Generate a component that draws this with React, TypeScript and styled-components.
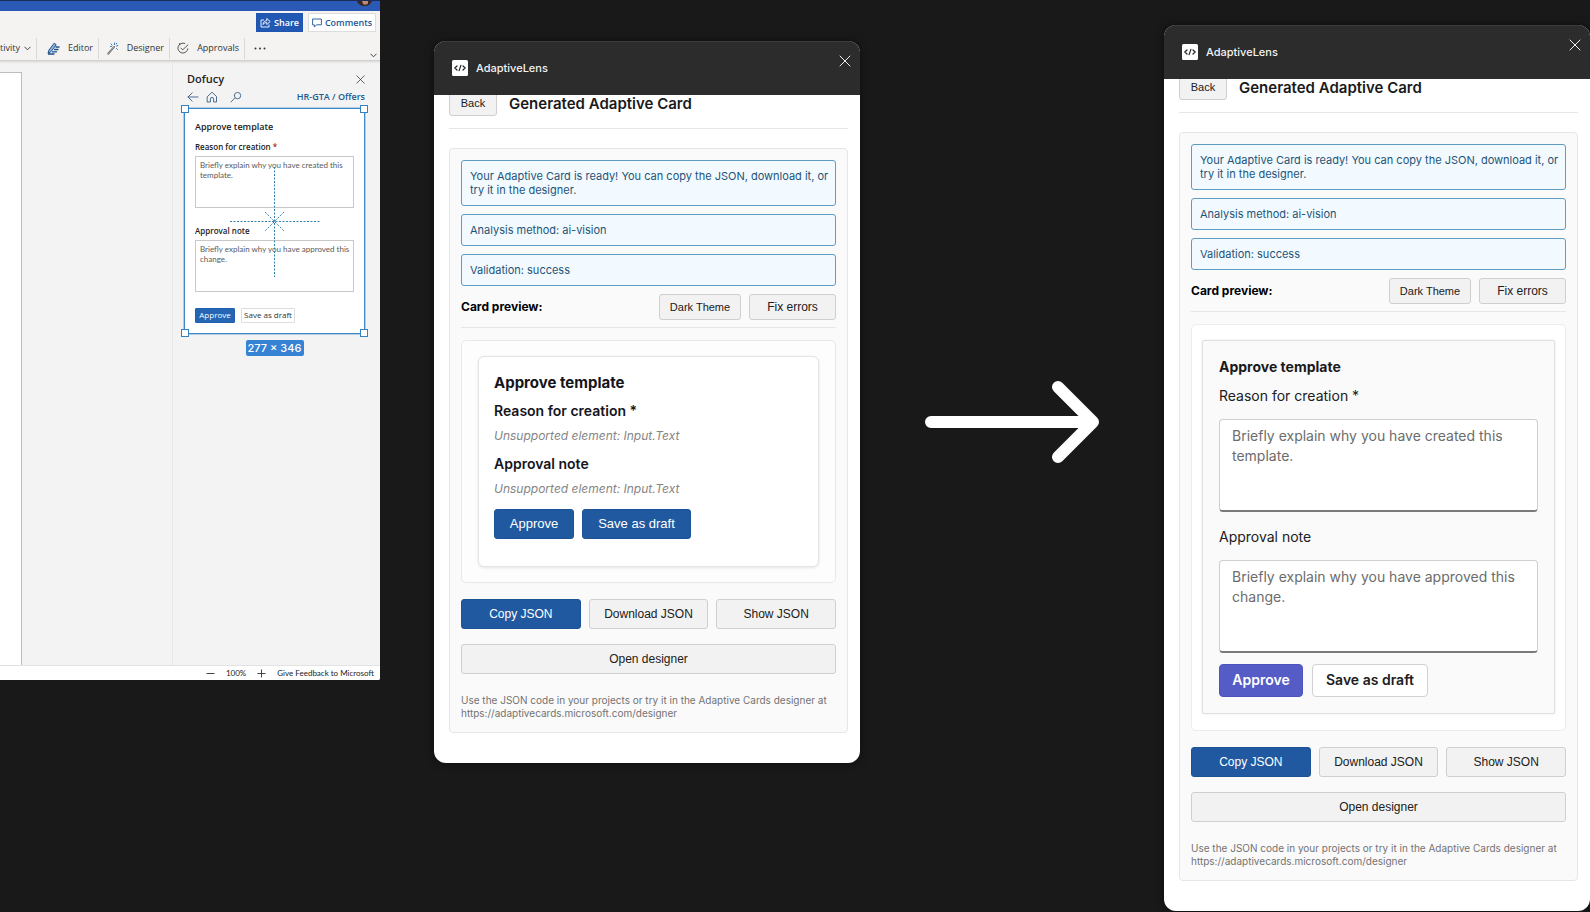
import React from "react";
import styled, { createGlobalStyle, css } from "styled-components";

const ui = `Inter, "Liberation Sans", sans-serif`;
const control = `"Liberation Sans", Arial, sans-serif`;
const office = `"Open Sans", "Noto Sans", sans-serif`;
const officeSmall = `Lato, "Open Sans", sans-serif`;

const GlobalStyle = createGlobalStyle`
  *, *::before, *::after { box-sizing: border-box; }
  html { background: #191919; }
  body { margin: 0; background: #191919; font-family: ${ui}; color: #1b1b1f; }
  h1, h2, h3, p { margin: 0; }
  button, textarea { margin: 0; }
  svg { flex-shrink: 0; }
`;

const Page = styled.main`
  display: grid;
  grid-template-columns: minmax(0, 380fr) minmax(0, 54fr) minmax(0, 426fr) minmax(0, 304fr) minmax(0, 426fr);
  align-items: start;
  min-height: 100vh;
  overflow: hidden;
`;

const Column = styled.div<{ $area: number; $top: number }>`
  grid-column: ${(p) => p.$area};
  grid-row: 1;
  padding-top: ${(p) => p.$top}px;
`;

/* ---------- Word window ---------- */

const WordWindow = styled.section`
  display: flex;
  flex-direction: column;
  overflow: hidden;
  background: #f3f3f3;
  font-family: ${office};
  border-bottom-right-radius: 2px;
`;

const TitleBar = styled.div`
  display: flex;
  justify-content: flex-end;
  height: 11px;
  padding-right: 8px;
  background: #2a5ab6;
  border-top: 1px solid #1b2c58;
`;

const Ribbon = styled.div`
  background: #f4f3f2;
  border-bottom: 1px solid #d2d0ce;
  box-shadow: 0 1px 2px rgba(0, 0, 0, 0.12);
  height: 50px;
`;

const RibbonTop = styled.div`
  display: flex;
  justify-content: flex-end;
  gap: 5px;
  padding: 2px 4px 0 0;
`;

const RibbonButton = styled.button<{ $primary?: boolean; $w: number }>`
  display: flex;
  align-items: center;
  justify-content: center;
  gap: 3px;
  width: ${(p) => p.$w}px;
  height: 19px;
  padding: 0;
  border: 1px solid ${(p) => (p.$primary ? "#1f55b0" : "#dcdcdc")};
  background: ${(p) => (p.$primary ? "#2158b4" : "#ffffff")};
  color: ${(p) => (p.$primary ? "#ffffff" : "#1c5796")};
  font: 600 9px/12px ${office};
`;

const RibbonTools = styled.div`
  display: flex;
  align-items: center;
  height: 28px;
  padding-top: 4px;
`;

const Tool = styled.button<{ $w: number; $gap?: number }>`
  display: flex;
  align-items: center;
  justify-content: flex-end;
  gap: ${(p) => p.$gap ?? 8}px;
  width: ${(p) => p.$w}px;
  height: 21px;
  padding: 0 5px 0 0;
  border: 0;
  border-right: 1px solid #d9d8d7;
  background: none;
  color: #333;
  font: 400 9px/12px ${office};
  white-space: nowrap;
`;

const MoreTool = styled.button`
  display: flex;
  align-items: center;
  padding: 0 0 0 9px;
  border: 0;
  background: none;
`;

const CollapseTool = styled.button`
  display: flex;
  align-self: flex-end;
  margin-left: auto;
  padding: 0 3px 2px 0;
  border: 0;
  background: none;
`;

const Workspace = styled.div`
  display: flex;
  min-height: 604px;
`;

const DocumentSheet = styled.div`
  width: 22px;
  margin-top: 11px;
  background: #ffffff;
  border: 1px solid #bdbdbd;
  border-left: 0;
  border-bottom: 0;
`;

const TaskPane = styled.aside`
  margin-left: auto;
  width: 208px;
  padding: 11px 15px 0 11px;
  border-left: 1px solid #e6e6e6;
`;

const PaneRow = styled.div<{ $h: number }>`
  display: flex;
  align-items: center;
  height: ${(p) => p.$h}px;
  padding-left: 3px;
`;

const PaneTitle = styled.h1`
  flex: 1;
  font: 600 11px/14px ${office};
  color: #1f1f1f;
`;

const IconButton = styled.button<{ $mr?: number }>`
  display: flex;
  padding: 0;
  margin-right: ${(p) => p.$mr ?? 0}px;
  border: 0;
  background: none;
`;

const PaneLink = styled.a`
  margin-left: auto;
  color: #205a93;
  font: 600 9px/12px ${office};
  text-decoration: none;
  white-space: nowrap;
`;

const Selection = styled.div`
  position: relative;
  margin-top: 1px;
  padding: 11px 10px 10px;
  border: 1px solid #3f8bc9;
  outline: 1px solid rgba(63, 139, 201, 0.35);
  background: #ffffff;
`;

const Handle = styled.span<{ $v: "top" | "bottom"; $h: "left" | "right" }>`
  position: absolute;
  ${(p) => p.$v}: -4px;
  ${(p) => p.$h}: -4px;
  width: 8px;
  height: 8px;
  background: #ffffff;
  border: 1px solid #3480c0;
`;

const Crosshair = styled.svg`
  position: absolute;
  left: 45px;
  top: 58px;
`;

const DraftTitle = styled.h2`
  font: 600 9px/14px ${office};
  color: #222;
  margin-bottom: 7px;
`;

const DraftLabel = styled.label`
  display: block;
  font: 600 8px/12px ${office};
  color: #222;
  margin-bottom: 3px;
  em { color: #a4262c; font-style: normal; }
`;

const DraftArea = styled.textarea<{ $gap: number }>`
  display: block;
  width: 100%;
  height: 52px;
  margin-bottom: ${(p) => p.$gap}px;
  padding: 3px 0 3px 4px;
  border: 1px solid #c8c8c8;
  background: #ffffff;
  font: 400 8px/10px ${officeSmall};
  resize: none;
  overflow: hidden;
  &::placeholder { color: #5a5a5a; opacity: 1; }
`;

const DraftActions = styled.div`
  display: flex;
  gap: 6px;
`;

const DraftButton = styled.button<{ $primary?: boolean }>`
  width: ${(p) => (p.$primary ? 40 : 54)}px;
  height: 15px;
  padding: 0 0 1px;
  border: 1px solid ${(p) => (p.$primary ? "#205eae" : "#dddddd")};
  border-radius: 1px;
  background: ${(p) => (p.$primary ? "#2465b4" : "#ffffff")};
  color: ${(p) => (p.$primary ? "#ffffff" : "#333333")};
  font: 400 8px/12px ${office};
  white-space: nowrap;
`;

const SizeBadge = styled.div`
  width: 58px;
  margin: 6px auto 0;
  border-radius: 2px;
  background: #3683d6;
  color: #ffffff;
  font: 500 11px/16px ${ui};
  text-align: center;
  white-space: nowrap;
`;

const StatusBar = styled.footer`
  display: flex;
  align-items: center;
  justify-content: flex-end;
  height: 15px;
  padding-right: 6px;
  border-top: 1px solid #e2e2e2;
  background: #ffffff;
  color: #222;
  font: 400 8px/12px ${officeSmall};
  gap: 11px;
`;

/* ---------- AdaptiveLens panel ---------- */

const Panel = styled.section`
  border-radius: 12px;
  overflow: hidden;
  background: #ffffff;
  box-shadow: 0 0 8px rgba(0, 0, 0, 0.5);
`;

const PanelHeader = styled.header`
  display: flex;
  align-items: center;
  gap: 8px;
  height: 54px;
  padding: 0 0 2px 18px;
  background: #2c2c2c;
  border-top: 1px solid #3c3c3c;
  color: #f2f2f2;
  font: 500 11px/16px ${ui};
`;

const CloseButton = styled.button`
  display: flex;
  align-self: flex-start;
  margin: 13px 9px 0 auto;
  padding: 0;
  border: 0;
  background: none;
`;

const PanelBody = styled.div`
  overflow: hidden;
  padding: 0 12px 30px 15px;
`;

/* The panel is scrolled a little, so the top of this row is under the header. */
const TitleRow = styled.div`
  display: flex;
  align-items: center;
  gap: 12px;
  margin: -5px 0 19px;
  padding-bottom: 12px;
  border-bottom: 1px solid #e6e6e6;
`;

const PanelTitle = styled.h2`
  padding-top: 2px;
  font: 600 15px/16px ${ui};
  color: #1a1a1a;
  white-space: nowrap;
`;

const Button = styled.button<{ $w?: number; $h?: number; $size?: number; $primary?: boolean; $grow?: boolean }>`
  ${(p) => (p.$grow ? css`flex: 1 1 0; min-width: 0;` : p.$w ? css`width: ${p.$w}px;` : css`width: 100%;`)}
  height: ${(p) => p.$h ?? 30}px;
  padding: 0;
  border: 1px solid ${(p) => (p.$primary ? "#1d5396" : "#d0cfce")};
  border-radius: 3px;
  background: ${(p) => (p.$primary ? "#20599f" : "#f3f2f2")};
  color: ${(p) => (p.$primary ? "#ffffff" : "#202020")};
  font: 400 ${(p) => p.$size ?? 12}px/16px ${control};
  white-space: nowrap;
`;

const Result = styled.div`
  padding: 11px 11px 12px;
  border: 1px solid #e6e6e6;
  border-radius: 4px;
  background: #fafafa;
`;

const Message = styled.p`
  margin-bottom: 8px;
  padding: 8px 0 8px 8px;
  border: 1px solid #5f9cc0;
  border-radius: 3px;
  background: #f3faff;
  color: #225478;
  font: 400 11px/14px ${ui};
`;

const PreviewBar = styled.div`
  display: flex;
  align-items: center;
  gap: 8px;
  margin-bottom: 12px;
  padding-bottom: 7px;
  border-bottom: 1px solid #e6e6e6;
`;

const PreviewLabel = styled.h3`
  flex: 1;
  font: 700 12px/16px ${ui};
  color: #000;
`;

const ActionRow = styled.div`
  display: flex;
  gap: 8px;
  margin: 16px 0 15px;
`;

const Hint = styled.p`
  margin-top: 20px;
  color: #737373;
  font: 400 10px/13px ${ui};
`;

const Preview = styled.div`
  padding: 15px 16px;
  border: 1px solid #e8e8e8;
  border-radius: 5px;
  background: #fdfdfd;
`;

const BasicCard = styled.div`
  padding: 15px 15px 27px;
  border: 1px solid #e4e4e4;
  border-radius: 6px;
  background: #ffffff;
  box-shadow: 0 1px 3px rgba(0, 0, 0, 0.1);
`;

const BasicTitle = styled.h3`
  font: 700 15px/22px ${ui};
  color: #15151c;
`;

const BasicLabel = styled.p<{ $gap: number }>`
  margin-top: ${(p) => p.$gap}px;
  font: 600 14px/20px ${ui};
  color: #15151c;
`;

const Unsupported = styled.p`
  margin-top: 7px;
  color: #858585;
  font: italic 400 12px/16px ${ui};
`;

const BasicActions = styled.div`
  display: flex;
  gap: 8px;
  margin-top: 12px;
`;

const FramePreview = styled.div`
  padding: 15px 10px 16px;
  border: 1px solid #ececec;
  border-radius: 5px;
  background: #ffffff;
`;

const FormCard = styled.form`
  padding: 16px;
  border: 1px solid #e0e0e0;
  border-radius: 2px;
  background: #fafafa;
  box-shadow: 0 0 3px rgba(0, 0, 0, 0.08);
`;

const FormTitle = styled.h3`
  margin-bottom: 9px;
  font: 700 14px/20px ${ui};
  color: #1a1a1a;
`;

const FormLabel = styled.label`
  display: block;
  margin-bottom: 13px;
  font: 400 14px/20px ${ui};
  color: #202020;
`;

const FormArea = styled.textarea<{ $gap: number }>`
  display: block;
  width: 100%;
  height: 93px;
  margin-bottom: ${(p) => p.$gap}px;
  padding: 6px 12px;
  border: 1px solid #cfcfcf;
  border-bottom: 2px solid #7a7a7a;
  border-radius: 4px;
  background: #ffffff;
  font: 400 14px/20px ${ui};
  resize: none;
  overflow: hidden;
  &::placeholder { color: #6c6c6c; opacity: 1; }
`;

const FormActions = styled.div`
  display: flex;
  gap: 9px;
`;

const FormButton = styled.button<{ $primary?: boolean }>`
  width: ${(p) => (p.$primary ? 84 : 116)}px;
  height: 33px;
  padding: 0 0 2px;
  border: 1px solid ${(p) => (p.$primary ? "#4f54bd" : "#d1d1d1")};
  border-radius: 4px;
  background: ${(p) => (p.$primary ? "#565cc6" : "#ffffff")};
  color: ${(p) => (p.$primary ? "#ffffff" : "#202020")};
  font: 600 14px/20px ${ui};
  white-space: nowrap;
`;

const ArrowColumn = styled(Column)`
  display: flex;
  justify-content: center;
`;

/* ---------- Drawings ---------- */

const Cross = ({ size, color, width = 1 }: { size: number; color: string; width?: number }) => (
  <svg width={size} height={size} viewBox="0 0 12 12" stroke={color} strokeWidth={width} strokeLinecap="round" fill="none">
    <path d="M1 1l10 10M11 1L1 11" />
  </svg>
);

const Chevron = () => (
  <svg width="7" height="5" viewBox="0 0 7 5" fill="none" stroke="#444" strokeWidth="1">
    <path d="M.5 .8l3 3 3-3" />
  </svg>
);

const CodeLogo = () => (
  <svg width="16" height="16" viewBox="0 0 16 16" fill="none" stroke="#222" strokeWidth="1.2" strokeLinecap="round" strokeLinejoin="round">
    <rect width="16" height="16" rx="1.5" fill="#fff" stroke="none" />
    <path d="M5 6L2.8 8 5 10M11 6l2.2 2L11 10M8.9 5.4L7.1 10.6" />
  </svg>
);

const ShareIcon = () => (
  <svg width="11" height="11" viewBox="0 0 11 11" fill="none" stroke="#fff" strokeWidth=".9" strokeLinejoin="round">
    <path d="M4 3H1v7h8V7.5" />
    <path d="M3 7.5C3.2 5 4.600 3.800 6.800 3.700V1.500L10.200 4.600 6.800 7.500V5.600C5 5.600 3.900 6.200 3 7.500z" />
  </svg>
);

const CommentIcon = () => (
  <svg width="10" height="10" viewBox="0 0 10 10" fill="none" stroke="#1c5796" strokeWidth=".9" strokeLinejoin="round">
    <path d="M.6 1h8.800v5.800H4.500L2.300 9V6.800H.6z" />
  </svg>
);

const EditorIcon = () => (
  <svg width="13" height="13" viewBox="0 0 13 13" fill="none" stroke="#1e4f8c" strokeLinejoin="round">
    <path d="M1 11.500L2 8 7.200 1.200 9.200 2.700 4 9.600z" strokeWidth="1" fill="#8fb7de" />
    <path d="M8.500 5h4M7 7.500h4.500M5 9.800h5M1 12h6.500" strokeWidth="1.300" />
  </svg>
);

const WandIcon = () => (
  <svg width="12" height="13" viewBox="0 0 12 13" fill="none" strokeLinecap="round">
    <path d="M1.300 11.700L7 5" stroke="#555" strokeWidth="1.800" />
    <path d="M1.500 11.500L6.800 5.200" stroke="#eee" strokeWidth=".6" />
    <path d="M7.500 1v1.500M4 2l1 1M10.800 3.500l-1.300.6M9.500 6.500l1 1M3.500 4.500h1M9.800 1.200l-.6.8" stroke="#2b78b8" strokeWidth="1" />
  </svg>
);

const ApprovalIcon = () => (
  <svg width="12" height="12" viewBox="0 0 12 12" fill="none" stroke="#444" strokeWidth=".9" strokeLinecap="round">
    <path d="M7.800 1.400A5 5 0 1 0 10.900 6.800M3.800 6l1.900 1.900L11 2.800" />
    <path d="M3 2.800L2.400 1.500" />
  </svg>
);

const Dots = () => (
  <svg width="13" height="3" viewBox="0 0 13 3" fill="#333">
    <circle cx="1.500" cy="1.500" r="1" /><circle cx="6" cy="1.500" r="1" /><circle cx="10.500" cy="1.500" r="1" />
  </svg>
);

const Avatar = () => (
  <svg width="15" height="5" viewBox="0 0 15 5">
    <path d="M0 0h15C14 3 11 5 7.500 5S1 3 0 0z" fill="#3a2523" />
    <path d="M5 0h6v2.500c-1.500 1.500-4 1.500-5 .5z" fill="#b98a74" />
  </svg>
);

const NavIcon = ({ d }: { d: string }) => (
  <svg width="12" height="12" viewBox="0 0 12 12" fill="none" stroke="#3c5f86" strokeWidth=".9" strokeLinecap="round" strokeLinejoin="round">
    <path d={d} />
  </svg>
);

const Sign = ({ plus }: { plus?: boolean }) => (
  <svg width="9" height="9" viewBox="0 0 9 9" stroke="#444" strokeWidth="1">
    <path d={plus ? "M.5 4.500h8M4.500.5v8" : "M.5 4.500h8"} />
  </svg>
);

const BigArrow = () => (
  <svg width="176" height="84" viewBox="0 0 176 84" fill="none" stroke="#fff" strokeWidth="12" strokeLinecap="round" strokeLinejoin="round">
    <path d="M7 42H168M134 7l35 35-35 35" />
  </svg>
);

/* ---------- Parts ---------- */

function WordApp() {
  return (
    <WordWindow aria-label="Word">
      <TitleBar><Avatar /></TitleBar>
      <Ribbon>
        <RibbonTop>
          <RibbonButton $primary $w={47}><ShareIcon />Share</RibbonButton>
          <RibbonButton $w={68}><CommentIcon />Comments</RibbonButton>
        </RibbonTop>
        <RibbonTools>
          <Tool $w={37} $gap={4}>tivity<Chevron /></Tool>
          <Tool $w={62}><EditorIcon />Editor</Tool>
          <Tool $w={71}><WandIcon />Designer</Tool>
          <Tool $w={75}><ApprovalIcon />Approvals</Tool>
          <MoreTool aria-label="More"><Dots /></MoreTool>
          <CollapseTool aria-label="Collapse ribbon"><Chevron /></CollapseTool>
        </RibbonTools>
      </Ribbon>
      <Workspace>
        <DocumentSheet />
        <TaskPane>
          <PaneRow $h={14}>
            <PaneTitle>Dofucy</PaneTitle>
            <IconButton aria-label="Close pane"><Cross size={9} color="#333" /></IconButton>
          </PaneRow>
          <PaneRow $h={21}>
            <IconButton aria-label="Back" $mr={7}><NavIcon d="M11 6H1M5.200 1.800L1 6l4.200 4.200" /></IconButton>
            <IconButton aria-label="Home" $mr={12}><NavIcon d="M1.500 5.500L6 1.200l4.500 4.300V11H7.600V8a1.600 1.600 0 0 0-3.200 0v3H1.500z" /></IconButton>
            <IconButton aria-label="Search"><NavIcon d="M1 11l3.800-4M4.300 4.600a3.200 3.200 0 1 1 6.400 0a3.200 3.200 0 1 1-6.400 0" /></IconButton>
            <PaneLink href="#offers">HR-GTA / Offers</PaneLink>
          </PaneRow>
          <Selection>
            <DraftTitle>Approve template</DraftTitle>
            <DraftLabel htmlFor="draft-reason">Reason for creation <em>*</em></DraftLabel>
            <DraftArea id="draft-reason" $gap={17} placeholder="Briefly explain why you have created this template." />
            <DraftLabel htmlFor="draft-note">Approval note</DraftLabel>
            <DraftArea id="draft-note" $gap={16} placeholder="Briefly explain why you have approved this change." />
            <DraftActions>
              <DraftButton $primary>Approve</DraftButton>
              <DraftButton>Save as draft</DraftButton>
            </DraftActions>
            <Crosshair width="90" height="110" viewBox="0 0 90 110" stroke="#2f7fae" strokeWidth="1" strokeDasharray="2 1.500" fill="none">
              <path d="M44.500 0V110M0 54.500H90M35 45l19 19M54 45L35 64" />
            </Crosshair>
            <Handle $v="top" $h="left" />
            <Handle $v="top" $h="right" />
            <Handle $v="bottom" $h="left" />
            <Handle $v="bottom" $h="right" />
          </Selection>
          <SizeBadge>277 × 346</SizeBadge>
        </TaskPane>
      </Workspace>
      <StatusBar>
        <Sign />
        <span>100%</span>
        <Sign plus />
        <span>Give Feedback to Microsoft</span>
      </StatusBar>
    </WordWindow>
  );
}

function LensPanel({ children }: { children: React.ReactNode }) {
  return (
    <Panel>
      <PanelHeader>
        <CodeLogo />
        <span>AdaptiveLens</span>
        <CloseButton aria-label="Close"><Cross size={12} color="#f0f0f0" /></CloseButton>
      </PanelHeader>
      <PanelBody>
        <TitleRow>
          <Button $w={48} $h={26} $size={11}>Back</Button>
          <PanelTitle>Generated Adaptive Card</PanelTitle>
        </TitleRow>
        <Result>
          <Message>Your Adaptive Card is ready! You can copy the JSON, download it, or try it in the designer.</Message>
          <Message>Analysis method: ai-vision</Message>
          <Message>Validation: success</Message>
          <PreviewBar>
            <PreviewLabel>Card preview:</PreviewLabel>
            <Button $w={82} $h={26} $size={11}>Dark Theme</Button>
            <Button $w={87} $h={26}>Fix errors</Button>
          </PreviewBar>
          {children}
          <ActionRow>
            <Button $grow $primary>Copy JSON</Button>
            <Button $grow>Download JSON</Button>
            <Button $grow>Show JSON</Button>
          </ActionRow>
          <Button>Open designer</Button>
          <Hint>Use the JSON code in your projects or try it in the Adaptive Cards designer at https://adaptivecards.microsoft.com/designer</Hint>
        </Result>
      </PanelBody>
    </Panel>
  );
}

export default function App() {
  return (
    <>
      <GlobalStyle />
      <Page>
        <Column $area={1} $top={0}>
          <WordApp />
        </Column>
        <Column $area={3} $top={41}>
          <LensPanel>
            <Preview>
              <BasicCard>
                <BasicTitle>Approve template</BasicTitle>
                <BasicLabel $gap={7}>Reason for creation *</BasicLabel>
                <Unsupported>Unsupported element: Input.Text</Unsupported>
                <BasicLabel $gap={10}>Approval note</BasicLabel>
                <Unsupported>Unsupported element: Input.Text</Unsupported>
                <BasicActions>
                  <Button $primary $w={80} $size={13}>Approve</Button>
                  <Button $primary $w={109} $size={13}>Save as draft</Button>
                </BasicActions>
              </BasicCard>
            </Preview>
          </LensPanel>
        </Column>
        <ArrowColumn $area={4} $top={380}>
          <BigArrow />
        </ArrowColumn>
        <Column $area={5} $top={25}>
          <LensPanel>
            <FramePreview>
              <FormCard>
                <FormTitle>Approve template</FormTitle>
                <FormLabel htmlFor="reason">Reason for creation *</FormLabel>
                <FormArea id="reason" $gap={15} placeholder="Briefly explain why you have created this template." />
                <FormLabel htmlFor="note">Approval note</FormLabel>
                <FormArea id="note" $gap={11} placeholder="Briefly explain why you have approved this change." />
                <FormActions>
                  <FormButton type="button" $primary>Approve</FormButton>
                  <FormButton type="button">Save as draft</FormButton>
                </FormActions>
              </FormCard>
            </FramePreview>
          </LensPanel>
        </Column>
      </Page>
    </>
  );
}
